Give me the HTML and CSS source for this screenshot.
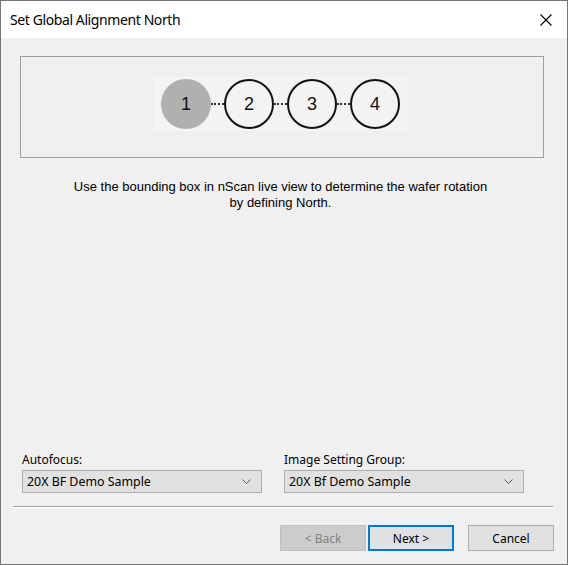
FILE: index.html
```html
<!DOCTYPE html>
<html>
<head>
<meta charset="utf-8">
<link rel="stylesheet" href="styles.css">
</head>
<body>
<div class="window">
  <div class="titlebar">
    <span class="title">Set Global Alignment North</span>
    <svg class="close" width="12" height="12" viewBox="0 0 12 12"><path d="M0.5 0.5 L11.5 11.5 M11.5 0.5 L0.5 11.5" stroke="#000" stroke-width="1.1" fill="none"/></svg>
  </div>
  <div class="content">
    <div class="panel">
      <div class="steps">
        <div class="step active">1</div>
        <div class="link"></div>
        <div class="step">2</div>
        <div class="link"></div>
        <div class="step">3</div>
        <div class="link"></div>
        <div class="step">4</div>
      </div>
    </div>
    <p class="desc">Use the bounding box in nScan live view to determine the wafer rotation<br>by defining North.</p>
    <div class="fields">
      <div class="field">
        <label class="label">Autofocus:</label>
        <div class="combo"><span>20X BF Demo Sample</span><svg class="chev" width="9" height="5" viewBox="0 0 9 5"><path d="M0.5 0.5 L4.5 4.5 L8.5 0.5" stroke="#555" fill="none"/></svg></div>
      </div>
      <div class="field">
        <label class="label">Image Setting Group:</label>
        <div class="combo"><span>20X Bf Demo Sample</span><svg class="chev" width="9" height="5" viewBox="0 0 9 5"><path d="M0.5 0.5 L4.5 4.5 L8.5 0.5" stroke="#555" fill="none"/></svg></div>
      </div>
    </div>
    <div class="sep"></div>
    <div class="buttons">
      <button class="btn disabled">&lt; Back</button>
      <button class="btn primary">Next &gt;</button>
      <button class="btn cancel">Cancel</button>
    </div>
  </div>
</div>
</body>
</html>
```
FILE: styles.css
```css
* { box-sizing: border-box; }
html, body { margin: 0; padding: 0; }
body { width: 568px; height: 565px; overflow: hidden; font-family: "Noto Sans", "Liberation Sans", sans-serif; }
.window {
  width: 568px; height: 565px;
  border: 1px solid #757575;
  background: #f0f0f0;
  display: flex; flex-direction: column;
}
.titlebar {
  height: 37px; background: #fff;
  display: flex; align-items: center; justify-content: space-between;
  padding: 0 15px 0 9px;
}
.title { font-size: 14px; color: #000; letter-spacing: -0.4px; }
.close { display: block; margin-top: 1px; }
.content { flex: 1; display: flex; flex-direction: column; }
.panel {
  margin: 18px 0 0 19px;
  width: 524px; height: 102px;
  border: 1px solid #a0a0a0;
  padding: 20px 0 0 133px;
}
.steps {
  width: 254px; height: 54px;
  background: #f4f3f2;
  display: flex; align-items: center;
  padding-left: 7px;
}
.step {
  width: 50px; height: 50px; border-radius: 50%;
  border: 2px solid #111;
  display: flex; align-items: center; justify-content: center;
  font-family: "Liberation Sans", Arial, sans-serif;
  font-size: 18px; color: #111;
  flex: none;
}
.step.active { background: #b1b0ae; border-color: #b1b0ae; }
.link { width: 13px; border-top: 2px dotted #333; flex: none; }
.desc {
  margin: 21px 0 0 0;
  text-align: center;
  font-family: "Liberation Sans", Arial, sans-serif;
  font-size: 13px; line-height: 16px; color: #000;
  padding-right: 7px;
}
.fields {
  margin-top: auto;
  display: flex; gap: 22px;
  padding-left: 21px;
}
.field { display: flex; flex-direction: column; }
.label { font-size: 12px; color: #000; height: 19px; line-height: 17px; }
.combo {
  width: 240px; height: 23px;
  border: 1px solid #adadad;
  background: #e1e1e1;
  display: flex; align-items: center; justify-content: space-between;
  padding: 0 10px 0 4px;
  font-size: 12.4px; color: #000;
}
.chev { display: block; }
.sep {
  margin: 13px 14px 0 12px;
  height: 2px; border-top: 1px solid #a0a0a0; border-bottom: 1px solid #fff;
}
.buttons {
  display: flex; justify-content: flex-end;
  padding: 17px 13px 13px 0;
}
.btn {
  width: 86px; height: 26px;
  border: 1px solid #adadad; background: #e1e1e1;
  font-family: "Noto Sans", "Liberation Sans", sans-serif;
  font-size: 12px; color: #000; padding: 0;
}
.btn.disabled { background: #cccccc; border-color: #bfbfbf; color: #838383; }
.btn.primary { border: 2px solid #0078d7; margin-left: 2px; }
.btn.cancel { margin-left: 14px; }
```
